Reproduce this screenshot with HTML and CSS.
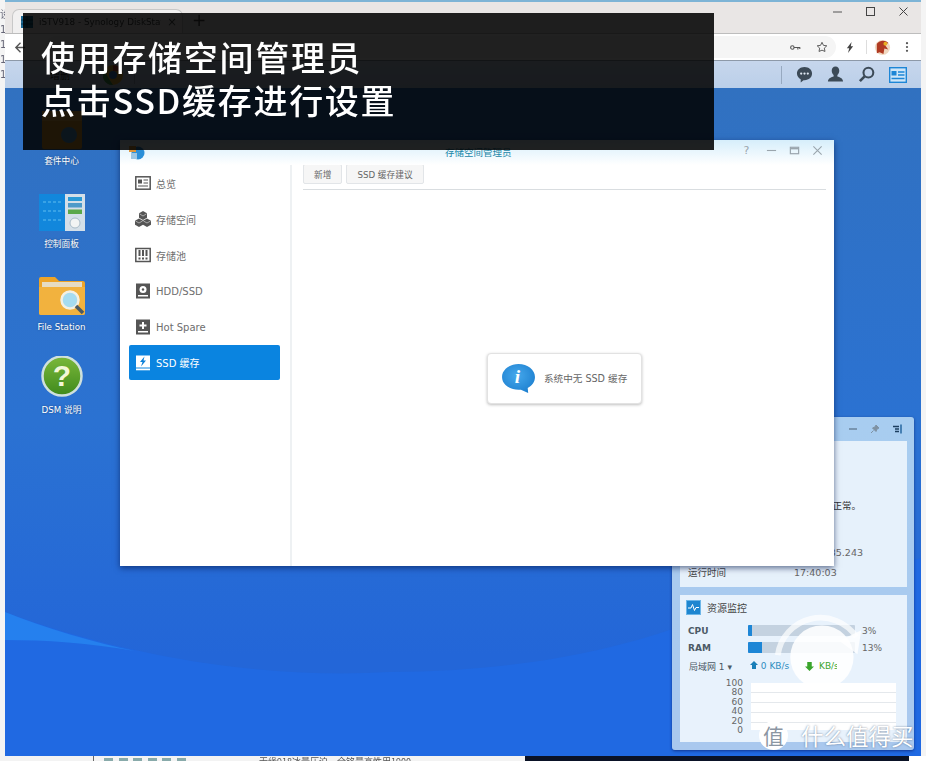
FILE: index.html
```html
<!DOCTYPE html>
<html lang="zh">
<head>
<meta charset="utf-8">
<title>存储空间管理员</title>
<link rel="stylesheet" href="styles.css">
</head>
<body>
<div class="screen">
  <div class="upper">
    <div class="edge edge-left"><span>设</span><span>1</span><span>1</span><span>1</span><span>1</span></div>
    <div class="browser">
      <div class="tabbar">
        <div class="tab">
          <svg class="tab-icon" viewBox="0 0 12 12"><rect width="12" height="12" fill="#1d6a96"/><path d="M0 4h12M0 8h12M6 0v12" stroke="#0b3d5a" stroke-width="1"/></svg>
          <span class="tab-title">iSTV918 - Synology DiskStati</span>
          <span class="tab-close">×</span>
        </div>
        <span class="tab-new">+</span>
        <div class="win-controls">
          <svg viewBox="0 0 12 12"><path d="M1 6h9" stroke="#555" stroke-width="1"/></svg>
          <svg viewBox="0 0 12 12"><rect x="1.500" y="1.500" width="8" height="8" fill="none" stroke="#444" stroke-width="1"/></svg>
          <svg viewBox="0 0 12 12"><path d="M1.500 1.500l8 8M9.500 1.500l-8 8" stroke="#444" stroke-width="1"/></svg>
        </div>
      </div>
      <div class="toolbar">
        <svg class="back" viewBox="0 0 14 14"><path d="M12 7H2M7 2L2 7l5 5" fill="none" stroke="#555" stroke-width="1.500"/></svg>
        <div class="addr">
          <svg class="tool-key" viewBox="0 0 14 8"><circle cx="3" cy="4" r="2.200" fill="none" stroke="#555" stroke-width="1.400"/><path d="M5 4h8M10 4v2.500M12.500 4v2" stroke="#555" stroke-width="1.400"/></svg>
          <svg class="tool-star" viewBox="0 0 14 14"><path d="M7 1.500l1.700 3.600 3.900.5-2.900 2.700.8 3.900L7 10.700l-3.500 1.500.8-3.900L1.400 5.600l3.900-.5z" fill="none" stroke="#555" stroke-width="1.100"/></svg>
        </div>
        <svg class="tool-bolt" viewBox="0 0 10 14"><path d="M7 0L1 8h3l-1.500 6L9 5.500H6z" fill="#444"/></svg>
        <span class="tool-sep"></span>
        <svg class="tool-avatar" viewBox="0 0 18 18"><circle cx="9" cy="9" r="8" fill="#f0d8c0"/><path d="M3 5c3-4 9-4 12-1l-3 3 3 4-4-1-1 6-4-2-3 1z" fill="#b03a22"/><circle cx="12" cy="5" r="2" fill="#e8b020"/></svg>
        <svg class="tool-dots" viewBox="0 0 4 14"><circle cx="2" cy="2.500" r="1.300" fill="#555"/><circle cx="2" cy="7" r="1.300" fill="#555"/><circle cx="2" cy="11.500" r="1.300" fill="#555"/></svg>
      </div>
      <div class="dsmbar">
        <span class="dsm-app">增删</span>
        <svg class="dsm-chrome" viewBox="0 0 20 20"><circle cx="10" cy="10" r="10" fill="#e9b23a"/><path d="M10 0a10 10 0 0 1 9 6H10z" fill="#c9483a"/><path d="M1 5l5 9 4 6a10 10 0 0 1-9-15z" fill="#3d9a4e"/><circle cx="10" cy="10" r="4" fill="#3f86d8"/></svg>
        <span class="dsm-sep"></span>
        <span class="dsm-spacer"></span>
        <span class="dsm-sep dsm-sep-right"></span>
        <svg class="dsm-icon" viewBox="0 0 18 18"><path d="M9 1c4.700 0 8 3 8 7s-3.300 7-8 7l-1 .1L5 17.500V14C2.600 12.800 1 10.600 1 8c0-4 3.300-7 8-7z" fill="#3c4a57"/><circle cx="5.500" cy="8" r="1.200" fill="#dfe8f2"/><circle cx="9" cy="8" r="1.200" fill="#dfe8f2"/><circle cx="12.500" cy="8" r="1.200" fill="#dfe8f2"/></svg>
        <svg class="dsm-icon" viewBox="0 0 18 18"><path d="M9 0.500c2.500 0 4 2 4 4.500 0 2-1 3.600-2 4.500v1.500c2 .8 6 1.500 6 5.500H1c0-4 4-4.700 6-5.500V9.500C6 8.600 5 7 5 5c0-2.500 1.500-4.500 4-4.500z" fill="#3c4a57"/></svg>
        <svg class="dsm-icon" viewBox="0 0 18 18"><circle cx="11" cy="7" r="5.200" fill="none" stroke="#3c4a57" stroke-width="2.200"/><path d="M7 11l-5 5" stroke="#3c4a57" stroke-width="2.800"/></svg>
        <svg class="dsm-icon dsm-card" viewBox="0 0 18 16"><rect x="0.700" y="0.700" width="16.600" height="14.600" fill="#cfe6f8" stroke="#1d86d6" stroke-width="1.400"/><rect x="2.500" y="4" width="5" height="4.500" fill="#1d86d6"/><path d="M9 5h6.500M9 8h6.500M2.500 11.500h13" stroke="#1d86d6" stroke-width="1.300"/></svg>
      </div>
      <div class="desktop">
        <svg class="wallpaper" viewBox="0 0 916 668" preserveAspectRatio="none">
          <defs>
            <linearGradient id="wall-top" x1="0" y1="0" x2="0" y2="1"><stop offset="0" stop-color="#3171c0"/><stop offset="0.5" stop-color="#2b72d2"/><stop offset="0.85" stop-color="#2366d8"/></linearGradient>
          </defs>
          <rect width="916" height="668" fill="url(#wall-top)"/>
          <path d="M0 524C110 565 250 592 385 584C500 584 600 565 670 540L916 470V668H0Z" fill="#2069e2"/>
          <path d="M0 524C40 540 90 555 130 563C85 555 40 552 0 552Z" fill="#2580ee"/>
        </svg>
        <div class="icons">
          <div class="d-icon">
            <svg class="d-img" viewBox="0 0 46 44"><rect x="3" y="4" width="40" height="38" rx="2" fill="#e8a032"/><path d="M3 4h40v10H3z" fill="#f2b94e"/><circle cx="30" cy="28" r="8" fill="#5aa3d6"/></svg>
            <span class="d-label">套件中心</span>
          </div>
          <div class="d-icon">
            <svg class="d-img" viewBox="0 0 46 44"><rect y="4" width="27" height="37" fill="#1287dc"/><rect x="26" y="4" width="20" height="37" fill="#d4dfe8"/><rect x="29" y="7" width="14" height="4" fill="#2a9ad6"/><rect x="29" y="13" width="14" height="4.500" fill="#4d9ac9"/><rect x="29" y="19.500" width="14" height="4.500" fill="#5aa84a"/><circle cx="36" cy="33" r="5" fill="#f2f4f4" stroke="#a9bcc9"/><path d="M4 12h18M4 21h18M4 30h18" stroke="#5fbdf0" stroke-width="1.200" stroke-dasharray="3 2"/></svg>
            <span class="d-label">控制面板</span>
          </div>
          <div class="d-icon">
            <svg class="d-img" viewBox="0 0 46 44"><path d="M0 6a2 2 0 0 1 2-2h14l4 4h24a2 2 0 0 1 2 2v30a2 2 0 0 1-2 2H2a2 2 0 0 1-2-2z" fill="#eda428"/><rect x="3" y="9" width="40" height="5" fill="#e6dcc4"/><path d="M0 14h46v26a2 2 0 0 1-2 2H2a2 2 0 0 1-2-2z" fill="#f2b23e"/><circle cx="31" cy="27" r="8.500" fill="#a6dcf0" stroke="#f4f0e2" stroke-width="2.500"/><path d="M37 33l7 7" stroke="#4a5a64" stroke-width="3.500"/></svg>
            <span class="d-label">File Station</span>
          </div>
          <div class="d-icon">
            <svg class="d-img" viewBox="0 0 46 44"><defs><linearGradient id="help-g" x1="0" y1="0" x2="0" y2="1"><stop offset="0" stop-color="#7bb83a"/><stop offset="1" stop-color="#3f8a1c"/></linearGradient></defs><circle cx="23" cy="20" r="19.500" fill="url(#help-g)" stroke="#cfe0dc" stroke-width="2.500"/><text class="help-q" x="23" y="30" text-anchor="middle">?</text></svg>
            <span class="d-label">DSM 说明</span>
          </div>
        </div>

        <div class="widget">
          <div class="widget-head">
            <svg viewBox="0 0 10 10"><path d="M1 5h8" stroke="#5a7187" stroke-width="1.200"/></svg>
            <svg viewBox="0 0 10 10"><path d="M6 1l3 3-2 1-1 2.500-3.500-3.500L5 3zM3.500 6.500L1 9" fill="#7f92a3" stroke="#7f92a3"/></svg>
            <svg viewBox="0 0 10 10"><path d="M9 0.500v9" stroke="#1c5f9a" stroke-width="1.400"/><path d="M1 2.500h6M3 5h4M3 7.500h4" stroke="#1c3f5f" stroke-width="1.500"/></svg>
          </div>
          <div class="card card-health">
            <div class="health-msg">系统状态正常。</div>
            <div class="health-row health-ip"><span></span><span>192.168.35.243</span></div>
            <div class="health-row"><span>运行时间</span><span class="uptime">17:40:03</span></div>
          </div>
          <div class="card card-res">
            <div class="res-head">
              <svg viewBox="0 0 15 15"><rect x="0.500" y="0.500" width="14" height="14" fill="#1e86d0" stroke="#6db6e8"/><path d="M2 8h3l1.500-3.500 2 6 1.500-3h3" fill="none" stroke="#fff" stroke-width="1"/></svg>
              <span>资源监控</span>
            </div>
            <div class="meter"><b>CPU</b><div class="bar"><i class="fill-cpu"></i></div><span>3%</span></div>
            <div class="meter"><b>RAM</b><div class="bar"><i class="fill-ram"></i></div><span>13%</span></div>
            <div class="net">
              <span class="net-name">局域网 1 ▾</span>
              <span class="net-up"><svg viewBox="0 0 8 8"><path d="M4 0l4 4H6v4H2V4H0z" fill="#1a7fb8"/></svg> 0 KB/s</span>
              <span class="net-down"><svg viewBox="0 0 8 8"><path d="M4 8L0 4h2V0h4v4h2z" fill="#3aa52c"/></svg></span>
              <span class="net-down-v">KB/s</span>
            </div>
            <div class="chart">
              <div class="chart-y"><span>100</span><span>80</span><span>60</span><span>40</span><span>20</span><span>0</span></div>
              <div class="chart-plot"></div>
            </div>
            <svg class="mark-logo" viewBox="0 0 100 100"><path d="M6 45A45 45 0 0 1 88 26" fill="none" stroke="#fff" stroke-opacity="0.700" stroke-width="6"/><path d="M70 30L93 19 89 44z" fill="#fff" fill-opacity="0.800"/><circle cx="52" cy="47" r="33" fill="#fff" fill-opacity="0.880"/></svg>
          </div>
        </div>

        <div class="window">
          <div class="win-title">
            <svg class="win-logo" viewBox="0 0 16 15"><circle cx="9" cy="8" r="6.500" fill="#2c8fd8"/><path d="M0 1h7v6H0z" fill="#e0973c"/><path d="M2 8h6v6H2z" fill="#9cc6e4"/></svg>
            <span class="win-name">存储空间管理员</span>
            <div class="win-btns">
              <span class="w-help">?</span>
              <svg viewBox="0 0 12 12"><path d="M1 6h10" stroke="#9aa5ad" stroke-width="1.200"/></svg>
              <svg viewBox="0 0 12 12"><rect x="1.500" y="2.500" width="9" height="7" fill="none" stroke="#9aa5ad" stroke-width="1.300"/><path d="M1.500 4h9" stroke="#9aa5ad" stroke-width="1.500"/></svg>
              <svg viewBox="0 0 12 12"><path d="M1.500 1.500l9 9M10.500 1.500l-9 9" stroke="#9aa5ad" stroke-width="1.200"/></svg>
            </div>
          </div>
          <div class="win-body">
            <nav class="side">
              <a class="nav">
                <svg viewBox="0 0 16 16"><rect x="0.800" y="1.800" width="14.400" height="12.400" fill="none" stroke="#555" stroke-width="1.500"/><rect x="3" y="4.500" width="4" height="4" fill="#555"/><path d="M8.500 5h4.500M8.500 8h4.500M3 11h10" stroke="#555" stroke-width="1.200"/></svg>
                <span>总览</span>
              </a>
              <a class="nav">
                <svg viewBox="0 0 16 16"><path d="M8 0l4 2.300v4.400L8 9 4 6.700V2.300z" fill="#555"/><path d="M4 7.500l4 2.300v4L4 16 0 13.800v-4z" fill="#555"/><path d="M12 7.500l4 2.300v4L12 16l-4-2.200v-4z" fill="#555"/><path d="M4.500 2.800L8 5l3.500-2.200M.5 10L4 12l3.500-2M8.500 10l3.500 2 3.500-2" fill="none" stroke="#fff" stroke-width="0.500"/></svg>
                <span>存储空间</span>
              </a>
              <a class="nav">
                <svg viewBox="0 0 16 16"><rect x="0.800" y="1.500" width="14.400" height="13" fill="none" stroke="#555" stroke-width="1.500"/><path d="M4.500 3v6M8 3v6M11.500 3v6" stroke="#555" stroke-width="2"/><path d="M4.500 10.500v2M8 10.500v2M11.500 10.500v2" stroke="#555" stroke-width="2"/></svg>
                <span>存储池</span>
              </a>
              <a class="nav">
                <svg viewBox="0 0 16 16"><rect x="1" y="0.500" width="14" height="15" fill="#555"/><circle cx="8" cy="6.500" r="3.500" fill="#fff"/><circle cx="8" cy="6.500" r="1.200" fill="#555"/><rect x="3" y="12" width="10" height="1.500" fill="#fff"/></svg>
                <span>HDD/SSD</span>
              </a>
              <a class="nav">
                <svg viewBox="0 0 16 16"><rect x="1" y="0.500" width="14" height="15" fill="#555"/><path d="M8 3v7M4.500 6.500h7" stroke="#fff" stroke-width="2"/><rect x="3" y="12" width="10" height="1.500" fill="#fff"/></svg>
                <span>Hot Spare</span>
              </a>
              <a class="nav nav-active">
                <svg viewBox="0 0 16 16"><rect x="1" y="0.500" width="14" height="12" fill="#fff"/><path d="M9.500 1.500L5 7h2.500L6 11.500 11 5.500H8.500z" fill="#0a7fd8"/><rect x="1" y="13.500" width="14" height="1.800" fill="#fff"/></svg>
                <span>SSD 缓存</span>
              </a>
            </nav>
            <main class="pane">
              <div class="pane-tools">
                <button class="btn">新增</button>
                <button class="btn">SSD 缓存建议</button>
              </div>
              <div class="pane-empty">
                <div class="notice">
                  <svg viewBox="0 0 36 32"><defs><radialGradient id="info-g" cx="0.450" cy="0.400" r="0.700"><stop offset="0" stop-color="#45a8ec"/><stop offset="1" stop-color="#1a7ccd"/></radialGradient></defs><path d="M18 1c9.500 0 17 5.800 17 13.500 0 5-3 9-7.500 11.300L28 31l-7.500-3.500c-.8.100-1.700.1-2.500.1C8 27.600 1 21.800 1 14.500S8.500 1 18 1z" fill="url(#info-g)"/><text class="info-i" x="17" y="21" text-anchor="middle">i</text></svg>
                  <span>系统中无 SSD 缓存</span>
                </div>
              </div>
            </main>
          </div>
        </div>
      </div>
    </div>
    <div class="edge edge-right"></div>
  </div>
  <div class="bottom">
    <div class="b-left"></div>
    <div class="b-mid">
      <span class="b-squares"><i></i><i></i><i></i><i></i><i></i><i></i></span>
      <span class="b-tab">无缘918冰量压迫，全铭最高性用1900</span>
    </div>
    <div class="b-dark"></div>
    <div class="b-end"></div>
  </div>

  <div class="mark-text">
    <span class="mark-badge">值</span>
    <span class="mark-name">什么值得买</span>
  </div>

  <div class="caption">
    <div>使用存储空间管理员</div>
    <div>点击SSD缓存进行设置</div>
  </div>
</div>
</body>
</html>
```
FILE: styles.css
```css
* { box-sizing: border-box; }
html, body { margin: 0; padding: 0; }
body {
  width: 926px;
  height: 761px;
  overflow: hidden;
  background: #f3f1f0;
  font-family: "DejaVu Sans", "Noto Sans CJK SC", sans-serif;
  color: #555;
}
.screen {
  position: relative;
  width: 926px;
  height: 761px;
  overflow: hidden;
  filter: blur(0.4px);
}
.upper { display: flex; height: 756px; }
.edge { width: 5px; flex: none; background: #f4f4f4; overflow: hidden; }
.edge-left { display: flex; flex-direction: column; padding-top: 9px; gap: 3px; font-size: 10px; line-height: 12px; color: #667; }
.browser {
  flex: 1;
  min-width: 0;
  display: flex;
  flex-direction: column;
  border-top: 2px solid #7db4d6;
}

/* chrome */
.tabbar {
  height: 31px;
  flex: none;
  background: #e9e6e5;
  display: flex;
  align-items: flex-end;
  padding-left: 7px;
  position: relative;
}
.tab {
  width: 171px;
  height: 24px;
  background: #f1f0f0;
  border: 1px solid #c8c8c8;
  border-bottom: 0;
  border-radius: 7px 7px 0 0;
  display: flex;
  align-items: center;
  padding: 0 5px 0 8px;
  gap: 6px;
}
.tab-icon { width: 12px; height: 12px; flex: none; }
.tab-title { flex: 1; font-size: 8.800px; white-space: nowrap; overflow: hidden; color: #444; }
.tab-close { font-size: 12px; color: #555; }
.tab-new { margin-left: 9px; padding-bottom: 3px; font-size: 17px; line-height: 20px; color: #444; }
.win-controls {
  position: absolute;
  right: 11px;
  top: 4px;
  display: flex;
  gap: 21px;
}
.win-controls svg { width: 12px; height: 12px; }
.toolbar {
  height: 27px;
  flex: none;
  background: #fff;
  border-top: 1px solid #bdbdbd;
  display: flex;
  align-items: center;
  padding-left: 9px;
}
.back { width: 13px; height: 13px; flex: none; }
.addr {
  margin-left: 18px;
  width: 791px;
  flex: none;
  height: 22px;
  border-radius: 11px;
  background: #f5f5f5;
  display: flex;
  align-items: center;
  justify-content: flex-end;
  gap: 15px;
  padding-right: 8px;
}
.tool-key { width: 11px; height: 7px; }
.tool-star { width: 12px; height: 12px; }
.tool-bolt { width: 8px; height: 11px; margin-left: 10px; flex: none; }
.tool-sep { width: 1px; height: 14px; background: #ddd; margin-left: 12px; flex: none; }
.tool-avatar { width: 17px; height: 17px; margin-left: 7px; flex: none; }
.tool-dots { width: 4px; height: 12px; margin-left: 14px; flex: none; }
.dsmbar {
  height: 28px;
  flex: none;
  border-top: 1px solid #8d99a8;
  background: linear-gradient(#c6d6ec, #bbcfe9);
  display: flex;
  align-items: center;
  padding-left: 45px;
}
.dsm-app { font-size: 10px; color: #333; width: 47px; }
.dsm-chrome { width: 20px; height: 20px; flex: none; margin-left: 6px; }
.dsm-sep { width: 1px; height: 18px; background: #97a9c0; margin-left: 11px; flex: none; }
.dsm-spacer { flex: 1; }
.dsm-sep-right { margin-right: 14px; }
.dsm-icon { width: 17px; height: 17px; flex: none; margin-right: 14px; }
.dsm-card { width: 18px; height: 16px; margin-right: 14px; }

/* desktop */
.desktop { flex: 1; position: relative; overflow: hidden; }
.wallpaper { position: absolute; left: 0; top: 0; width: 100%; height: 100%; }
.icons {
  position: absolute;
  left: 0;
  top: 17px;
  width: 113px;
  display: flex;
  flex-direction: column;
}
.d-icon { height: 83px; display: flex; flex-direction: column; align-items: center; padding-top: 2px; }
.d-img { width: 46px; height: 44px; flex: none; }
.d-label { margin-top: 4px; font-size: 8.700px; line-height: 12px; color: #fff; white-space: nowrap; text-shadow: 0 0 2px rgba(0,0,0,.4); }
.help-q { font-family: "Liberation Sans", sans-serif; font-weight: 700; font-size: 30px; fill: #f3f7d8; }

/* widget */
.widget {
  position: absolute;
  left: 667px;
  top: 329px;
  width: 242px;
  height: 333px;
  background: linear-gradient(#a8cdf0, #a9c8ee);
  border-radius: 3px;
  box-shadow: 0 1px 3px rgba(0,0,60,.5);
  padding: 0 7px 0 8px;
  display: flex;
  flex-direction: column;
}
.widget-head {
  height: 24px;
  flex: none;
  display: flex;
  align-items: center;
  justify-content: flex-end;
  gap: 12px;
  padding-right: 5px;
}
.widget-head svg { width: 10px; height: 10px; }
.card { background: #e6f1fb; flex: none; }
.card-health {
  height: 146px;
  margin-bottom: 8px;
  padding: 57px 8px 0;
  font-size: 9.500px;
  color: #444;
}
.health-msg { text-align: right; padding-right: 38px; line-height: 16px; color: #333; }
.health-row { display: flex; justify-content: space-between; line-height: 14px; }
.health-ip { margin-top: 32px; padding-right: 36px; color: #666; }
.health-ip + .health-row { margin-top: 6px; justify-content: flex-start; }
.uptime { margin-left: 68px; color: #666; }
.card-res { height: 147px; padding: 5px 8px 0 6px; background: #e8f2fc; position: relative; overflow: hidden; }
.res-head { display: flex; align-items: center; gap: 6px; font-size: 10px; color: #444; }
.res-head svg { width: 15px; height: 15px; }
.meter {
  display: flex;
  align-items: center;
  height: 17px;
  font-size: 9px;
  margin-left: 2px;
  color: #666;
}
.res-head + .meter { margin-top: 7px; }
.meter b { width: 60px; font-weight: 700; color: #4c5a66; }
.bar { width: 107px; height: 11px; background: #c4d2e0; border-radius: 1px; margin-right: 7px; overflow: hidden; }
.bar i { display: block; height: 100%; background: #1d86d6; }
.fill-cpu { width: 4px; }
.fill-ram { width: 14px; }
.net { display: flex; align-items: center; height: 20px; font-size: 9px; margin-left: 3px; position: relative; z-index: 1; }
.net-name { width: 61px; color: #4c5a66; }
.net-up { width: 55px; color: #2e8cbf; white-space: nowrap; }
.net-up svg { width: 8px; height: 8px; }
.net-down { width: 14px; display: flex; }
.net-down svg { width: 9px; height: 11px; }
.net-down-v { color: #3aa52c; width: 18px; overflow: hidden; white-space: nowrap; }
.chart { display: flex; margin-top: 3px; }
.chart-y {
  width: 57px;
  height: 56px;
  display: flex;
  flex-direction: column;
  justify-content: space-between;
  text-align: right;
  font-size: 9px;
  line-height: 9px;
  color: #666;
}
.chart-plot {
  margin-left: 8px;
  width: 145px;
  height: 47px;
  margin-top: 4px;
  background: repeating-linear-gradient(#fff 0, #fff 9px, #e4e8ec 9px, #e4e8ec 10px);
}
.mark-logo { position: absolute; left: 92px; top: 17px; width: 96px; height: 96px; }

/* window */
.window {
  position: absolute;
  left: 115px;
  top: 52px;
  width: 714px;
  height: 426px;
  background: #fff;
  box-shadow: 0 2px 6px rgba(0,20,70,.6);
  display: flex;
  flex-direction: column;
}
.win-title {
  height: 25px;
  flex: none;
  background: linear-gradient(#d6eefb, #fff);
  display: flex;
  align-items: center;
  position: relative;
  padding-left: 9px;
}
.win-logo { width: 16px; height: 15px; }
.win-name {
  position: absolute;
  left: 325px;
  top: 5px;
  font-size: 9.500px;
  line-height: 14px;
  color: #1b87a8;
  font-family: "Noto Sans CJK SC", sans-serif;
}
.win-btns {
  position: absolute;
  right: 11px;
  top: 5px;
  display: flex;
  gap: 12px;
  align-items: center;
}
.win-btns svg { width: 11px; height: 11px; }
.w-help { width: 11px; margin-right: 2px; font-size: 11px; line-height: 11px; color: #9aa5ad; text-align: center; }
.win-body { flex: 1; display: flex; min-height: 0; }
.side {
  width: 172px;
  flex: none;
  border-right: 2px solid #eef1f3;
  padding: 0 10px 0 9px;
}
.nav {
  display: flex;
  align-items: center;
  height: 36px;
  padding-left: 6px;
  gap: 5px;
  font-size: 10px;
  color: #6e6e6e;
  white-space: nowrap;
}
.nav svg { width: 16px; height: 16px; flex: none; }
.nav-active {
  background: #0a84e0;
  color: #fff;
  border-radius: 2px;
  height: 35px;
}
.pane { flex: 1; display: flex; flex-direction: column; padding: 0 8px 0 11px; min-width: 0; margin-top: -1px; }
.pane-tools {
  height: 25px;
  flex: none;
  border-bottom: 1px solid #d9dde0;
  display: flex;
  gap: 4px;
  align-items: flex-start;
  box-sizing: content-box;
}
.btn {
  height: 20px;
  padding: 0 10px;
  background: #f6f6f6;
  border: 1px solid #e2e5e8;
  border-radius: 2px;
  font-family: "DejaVu Sans", "Noto Sans CJK SC", sans-serif;
  font-size: 8.700px;
  color: #666;
}
.pane-empty { flex: 1; display: flex; align-items: center; justify-content: center; }
.notice {
  width: 155px;
  height: 51px;
  background: #fff;
  border: 1px solid #e2e2e2;
  border-radius: 4px;
  box-shadow: 0 1px 3px rgba(0,0,0,.25);
  display: flex;
  align-items: center;
  padding-left: 13px;
  gap: 8px;
  font-size: 9.600px;
  color: #666;
  white-space: nowrap;
}
.notice svg { width: 35px; height: 31px; flex: none; }
.info-i { font-family: "Liberation Serif", serif; font-style: italic; font-weight: 700; font-size: 20px; fill: #fff; }

/* bottom strip */
.bottom { height: 5px; display: flex; overflow: hidden; background: #f3f3f3; }
.b-left { width: 93px; flex: none; }
.b-mid {
  width: 432px;
  flex: none;
  display: flex;
  border-left: 1px solid #666;
  font-size: 9px;
  color: #555;
  padding-left: 10px;
  gap: 73px;
}
.b-squares { display: flex; gap: 5.600px; padding-top: 2px; flex: none; }
.b-squares i { width: 9px; height: 9px; background: #8aa; }
.b-tab { white-space: nowrap; line-height: 11px; font-family: "Noto Sans CJK SC", sans-serif; }
.b-dark { width: 384px; flex: none; background: #0a1226; }
.b-end { flex: 1; background: #fff; }

/* overlays */
.caption {
  position: absolute;
  left: 23px;
  top: 13px;
  width: 691px;
  height: 137px;
  padding: 22px 0 0 18px;
  background: rgba(0,0,0,.87);
  color: #fff;
  font-family: "Noto Sans CJK SC", sans-serif;
  font-weight: 500;
  font-size: 34px;
  line-height: 43px;
  letter-spacing: 1.700px;
  white-space: nowrap;
}
.mark-text {
  position: absolute;
  left: 759px;
  top: 720px;
  display: flex;
  align-items: center;
  gap: 13px;
  font-family: "Noto Sans CJK SC", sans-serif;
  color: #fff;
}
.mark-badge {
  width: 29px;
  height: 29px;
  border-radius: 50%;
  background: #fff;
  color: #8b96a3;
  font-size: 21px;
  line-height: 28px;
  text-align: center;
}
.mark-name { font-size: 22.500px; line-height: 30px; text-shadow: 0 0 2px rgba(60,80,110,.75); }
```
